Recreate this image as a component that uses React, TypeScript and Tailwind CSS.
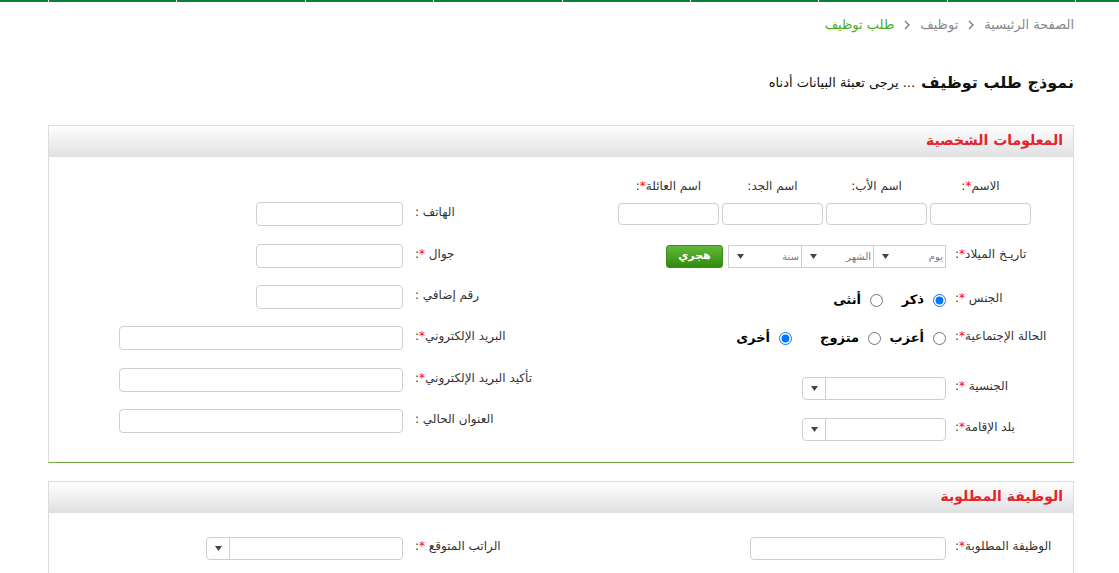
import React from 'react';

const Req = () => <span className="text-[#f00]">*</span>;

const Arrow = () => (
  <svg width="7" height="5" viewBox="0 0 7 5" className="shrink-0">
    <path d="M0 0 L7 0 L3.5 5 Z" fill="#444" />
  </svg>
);

const Chevron = () => (
  <svg width="6" height="10" viewBox="0 0 6 10" className="mx-[10px]">
    <path d="M1 1 L5 5 L1 9" fill="none" stroke="#777" strokeWidth="1.3" />
  </svg>
);

// label cell, text kept to the left edge like the original form
const Label: React.FC<{ w: string; children: React.ReactNode }> = ({ w, children }) => (
  <div className={`${w} shrink-0 mb-[5px] text-left whitespace-nowrap text-[12px] text-[#333] leading-none`}>
    <span dir="rtl">{children}</span>
  </div>
);

const TextInput: React.FC<{ w: string; h?: string }> = ({ w, h = 'h-[24px]' }) => (
  <input type="text" className={`${w} ${h} rounded-[4px] border border-[#cfcfcf] bg-white outline-none`} />
);

const Combo: React.FC<{ w: string }> = ({ w }) => (
  <div className={`${w} h-[23px] flex rounded-[4px] border border-[#cfcfcf] bg-white`}>
    <div className="flex-1" />
    <div className="w-[23px] border-r border-[#cfcfcf] flex items-center justify-center">
      <Arrow />
    </div>
  </div>
);

const DatePart: React.FC<{ text: string; last?: boolean }> = ({ text, last }) => (
  <div className={`w-[72px] h-full flex items-center justify-between pl-[8px] pr-[2px] ${last ? '' : 'border-l border-[#cfcfcf]'}`}>
    <span className="text-[10px] text-[#777]">{text}</span>
    <Arrow />
  </div>
);

const Radio: React.FC<{ name: string; label: string; checked?: boolean; w?: string }> = ({ name, label, checked, w = '' }) => (
  <label className={`${w} flex items-center gap-[9px]`}>
    <input type="radio" name={name} defaultChecked={checked} className="m-0 w-[13px] h-[13px]" />
    <span className="text-[13px] font-bold text-black">{label}</span>
  </label>
);

const PanelHeader: React.FC<{ title: string }> = ({ title }) => (
  <div className="h-[31px] flex items-center pr-[10px] pb-[3px] bg-gradient-to-b from-white to-[#dfe0e1]">
    <h3 className="text-[14px] font-bold text-[#e3242b]">{title}</h3>
  </div>
);

const App: React.FC = () => {
  const segments = [0, 1, 2, 3, 4, 5, 6, 7];

  return (
    <div className="min-h-[640px] bg-white font-['DejaVu_Sans',sans-serif]">
      {/* top strip */}
      <div className="flex h-[2px]">
        <div className="w-[48px] bg-[#0b7f36]" />
        {segments.map((s) => (
          <div key={s} className="w-[127.4px] ml-[1px] bg-[#0b7f36]" />
        ))}
        <div className="flex-1 ml-[1px] bg-[#0b7f36]" />
      </div>

      <div dir="rtl" className="w-[1026px] ml-[48px]">
        {/* breadcrumb */}
        <div className="mt-[14px] h-[18px] flex items-center text-[13px]">
          <span className="text-[#888]">الصفحة الرئيسية</span>
          <Chevron />
          <span className="text-[#888]">توظيف</span>
          <Chevron />
          <span className="text-[#4cae1c]">طلب توظيف</span>
        </div>

        {/* title */}
        <div className="mt-[39px] h-[20px] flex items-center text-[#111]">
          <span className="text-[16px] font-bold">نموذج طلب توظيف</span>
          <span className="text-[13px] mr-[6px]">... يرجى تعبئة البيانات أدناه</span>
        </div>

        {/* personal info */}
        <div className="mt-[32px] border border-[#dcdcdc] border-b-[#73a942]">
          <PanelHeader title="المعلومات الشخصية" />
          <div className="flex pb-[21px]">
            {/* right column */}
            <div className="w-[513px] shrink-0">
              <div className="pt-[21px] pr-[42px]">
                <div className="flex gap-[3px] h-[16px] items-center text-[12px] text-[#333]">
                  <div className="w-[101px] text-center">الاسم<Req />:</div>
                  <div className="w-[101px] text-center">اسم الأب:</div>
                  <div className="w-[101px] text-center">اسم الجد:</div>
                  <div className="w-[101px] text-center">اسم العائلة<Req />:</div>
                </div>
                <div className="mt-[9px] flex gap-[3px]">
                  <TextInput w="w-[101px]" h="h-[22px]" />
                  <TextInput w="w-[101px]" h="h-[22px]" />
                  <TextInput w="w-[101px]" h="h-[22px]" />
                  <TextInput w="w-[101px]" h="h-[22px]" />
                </div>
              </div>

              <div className="mt-[20px] h-[23px] flex items-center pr-[10px]">
                <Label w="w-[108px]">تاريـخ الميلاد<Req />:</Label>
                <div className="mr-[9px] h-[23px] flex border border-[#cfcfcf]">
                  <DatePart text="يوم" />
                  <DatePart text="الشهر" />
                  <DatePart text="سنة" last />
                </div>
                <button className="mr-[5px] w-[57px] h-[23px] rounded-[3px] border border-[#3a8d1a] bg-gradient-to-b from-[#62b838] to-[#2f8b0d] text-white text-[11px] font-bold">
                  هجري
                </button>
              </div>

              <div className="mt-[22px] h-[20px] flex items-center pr-[10px]">
                <Label w="w-[108px]">الجنس <Req />:</Label>
                <div className="mr-[9px] flex items-center">
                  <Radio name="gender" label="ذكر" checked w="w-[63px]" />
                  <Radio name="gender" label="أنثى" />
                </div>
              </div>

              <div className="mt-[18px] h-[20px] flex items-center pr-[10px]">
                <Label w="w-[108px]">الحالة الإجتماعية<Req />:</Label>
                <div className="mr-[9px] flex items-center">
                  <Radio name="status" label="أعزب" w="w-[65px]" />
                  <Radio name="status" label="متزوج" w="w-[89px]" />
                  <Radio name="status" label="أخرى" checked />
                </div>
              </div>

              <div className="mt-[29px] h-[23px] flex items-center pr-[10px]">
                <Label w="w-[108px]">الجنسية <Req />:</Label>
                <div className="mr-[9px]">
                  <Combo w="w-[144px]" />
                </div>
              </div>

              <div className="mt-[18px] h-[23px] flex items-center pr-[10px]">
                <Label w="w-[108px]">بلد الإقامة<Req />:</Label>
                <div className="mr-[9px]">
                  <Combo w="w-[144px]" />
                </div>
              </div>
            </div>

            {/* left column */}
            <div className="flex-1 pt-[45px]">
              <div className="h-[24px] flex items-center pr-[15px]">
                <Label w="w-[130px]">الهاتف :</Label>
                <div className="mr-[12px]"><TextInput w="w-[147px]" /></div>
              </div>
              <div className="mt-[18px] h-[24px] flex items-center pr-[15px]">
                <Label w="w-[130px]">جوال <Req />:</Label>
                <div className="mr-[12px]"><TextInput w="w-[147px]" /></div>
              </div>
              <div className="mt-[17px] h-[24px] flex items-center pr-[15px]">
                <Label w="w-[130px]">رقم إضافي :</Label>
                <div className="mr-[12px]"><TextInput w="w-[147px]" /></div>
              </div>
              <div className="mt-[17px] h-[24px] flex items-center pr-[15px]">
                <Label w="w-[130px]">البريد الإلكتروني<Req />:</Label>
                <div className="mr-[12px]"><TextInput w="w-[284px]" /></div>
              </div>
              <div className="mt-[18px] h-[24px] flex items-center pr-[15px]">
                <Label w="w-[130px]">تأكيد البريد الإلكتروني<Req />:</Label>
                <div className="mr-[12px]"><TextInput w="w-[284px]" /></div>
              </div>
              <div className="mt-[17px] h-[24px] flex items-center pr-[15px]">
                <Label w="w-[130px]">العنوان الحالي :</Label>
                <div className="mr-[12px]"><TextInput w="w-[284px]" /></div>
              </div>
            </div>
          </div>
        </div>

        {/* required job */}
        <div className="mt-[18px] border border-[#dcdcdc]">
          <PanelHeader title="الوظيفة المطلوبة" />
          <div className="flex pt-[24px] pb-[40px]">
            <div className="w-[513px] shrink-0 h-[23px] flex items-center pr-[10px]">
              <Label w="w-[108px]">الوظيفة المطلوبة<Req />:</Label>
              <div className="mr-[9px]"><TextInput w="w-[196px]" h="h-[23px]" /></div>
            </div>
            <div className="flex-1 h-[23px] flex items-center pr-[15px]">
              <Label w="w-[130px]">الراتب المتوقع <Req />:</Label>
              <div className="mr-[12px]"><Combo w="w-[197px]" /></div>
            </div>
          </div>
        </div>
      </div>
    </div>
  );
};

export default App;
